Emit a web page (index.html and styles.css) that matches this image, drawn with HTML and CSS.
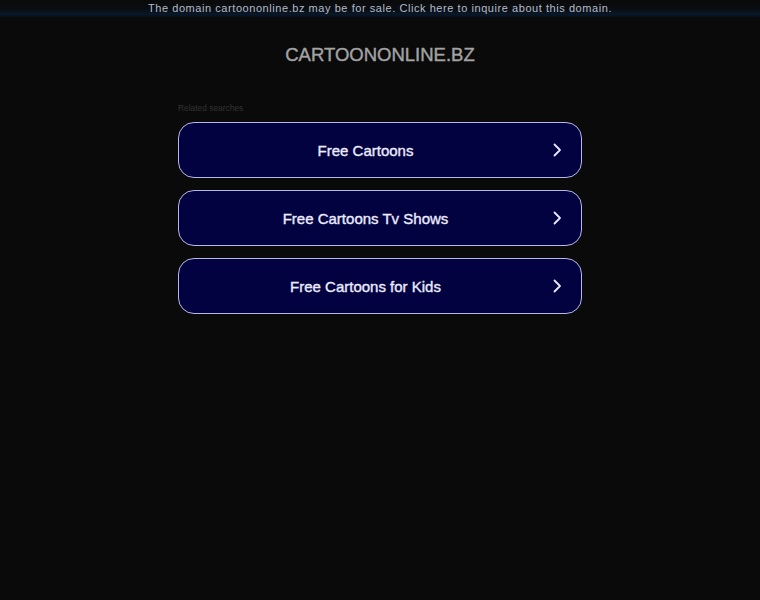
FILE: index.html
```html
<!DOCTYPE html>
<html>
<head>
<meta charset="utf-8">
<link rel="stylesheet" href="styles.css">
</head>
<body>
<div class="topbar"><span class="topbar-text">The domain cartoononline.bz may be for sale. Click here to inquire about this domain.</span></div>
<div class="header"><h1 class="title">CARTOONONLINE.BZ</h1></div>
<div class="main">
  <div class="related">Related searches</div>
  <div class="links">
    <a class="link"><span class="link-text">Free Cartoons</span><svg class="chev" viewBox="0 0 10 16" width="10" height="16"><path d="M2.5 2.5 L8 8 L2.5 13.5" fill="none" stroke="#e8e8ff" stroke-width="1.8" stroke-linecap="round" stroke-linejoin="round"/></svg></a>
    <a class="link"><span class="link-text">Free Cartoons Tv Shows</span><svg class="chev" viewBox="0 0 10 16" width="10" height="16"><path d="M2.5 2.5 L8 8 L2.5 13.5" fill="none" stroke="#e8e8ff" stroke-width="1.8" stroke-linecap="round" stroke-linejoin="round"/></svg></a>
    <a class="link"><span class="link-text">Free Cartoons for Kids</span><svg class="chev" viewBox="0 0 10 16" width="10" height="16"><path d="M2.5 2.5 L8 8 L2.5 13.5" fill="none" stroke="#e8e8ff" stroke-width="1.8" stroke-linecap="round" stroke-linejoin="round"/></svg></a>
  </div>
</div>
</body>
</html>
```

FILE: styles.css
```css
html, body {
  margin: 0;
  padding: 0;
  background: #0a0a0a;
  font-family: "Liberation Sans", Arial, sans-serif;
}
.topbar {
  height: 17px;
  background: linear-gradient(to bottom, #0a0a0a 0%, #0a0d12 55%, #08182a 85%, #0a0f18 100%);
  display: flex;
  justify-content: center;
  align-items: flex-start;
}
.topbar-text {
  font-size: 11px;
  line-height: 16px;
  color: #b4bcc8;
  letter-spacing: 0.56px;
}
.header {
  display: flex;
  justify-content: center;
  padding-top: 27px;
}
.title {
  margin: 0;
  font-size: 18.5px;
  line-height: 22px;
  font-weight: normal;
  color: #a3a3a3;
  letter-spacing: 0;
  -webkit-text-stroke: 0.4px #a3a3a3;
}
.main {
  width: 404px;
  margin: 0 auto;
  padding-top: 37px;
}
.related {
  font-size: 8.4px;
  line-height: 11px;
  color: #333333;
  margin-bottom: 8px;
}
.links {
  display: flex;
  flex-direction: column;
  gap: 12px;
}
.link {
  box-sizing: border-box;
  height: 56px;
  border: 1px solid #b8b8e8;
  border-radius: 16px;
  background: #020240;
  display: flex;
  align-items: center;
  padding: 0 19px 0 20px;
}
.link-text {
  flex: 1;
  text-align: center;
  font-size: 15px;
  font-weight: normal;
  color: #ececff;
  -webkit-text-stroke: 0.35px #ececff;
  margin-right: 20px;
}
.chev {
  flex: none;
}
```
